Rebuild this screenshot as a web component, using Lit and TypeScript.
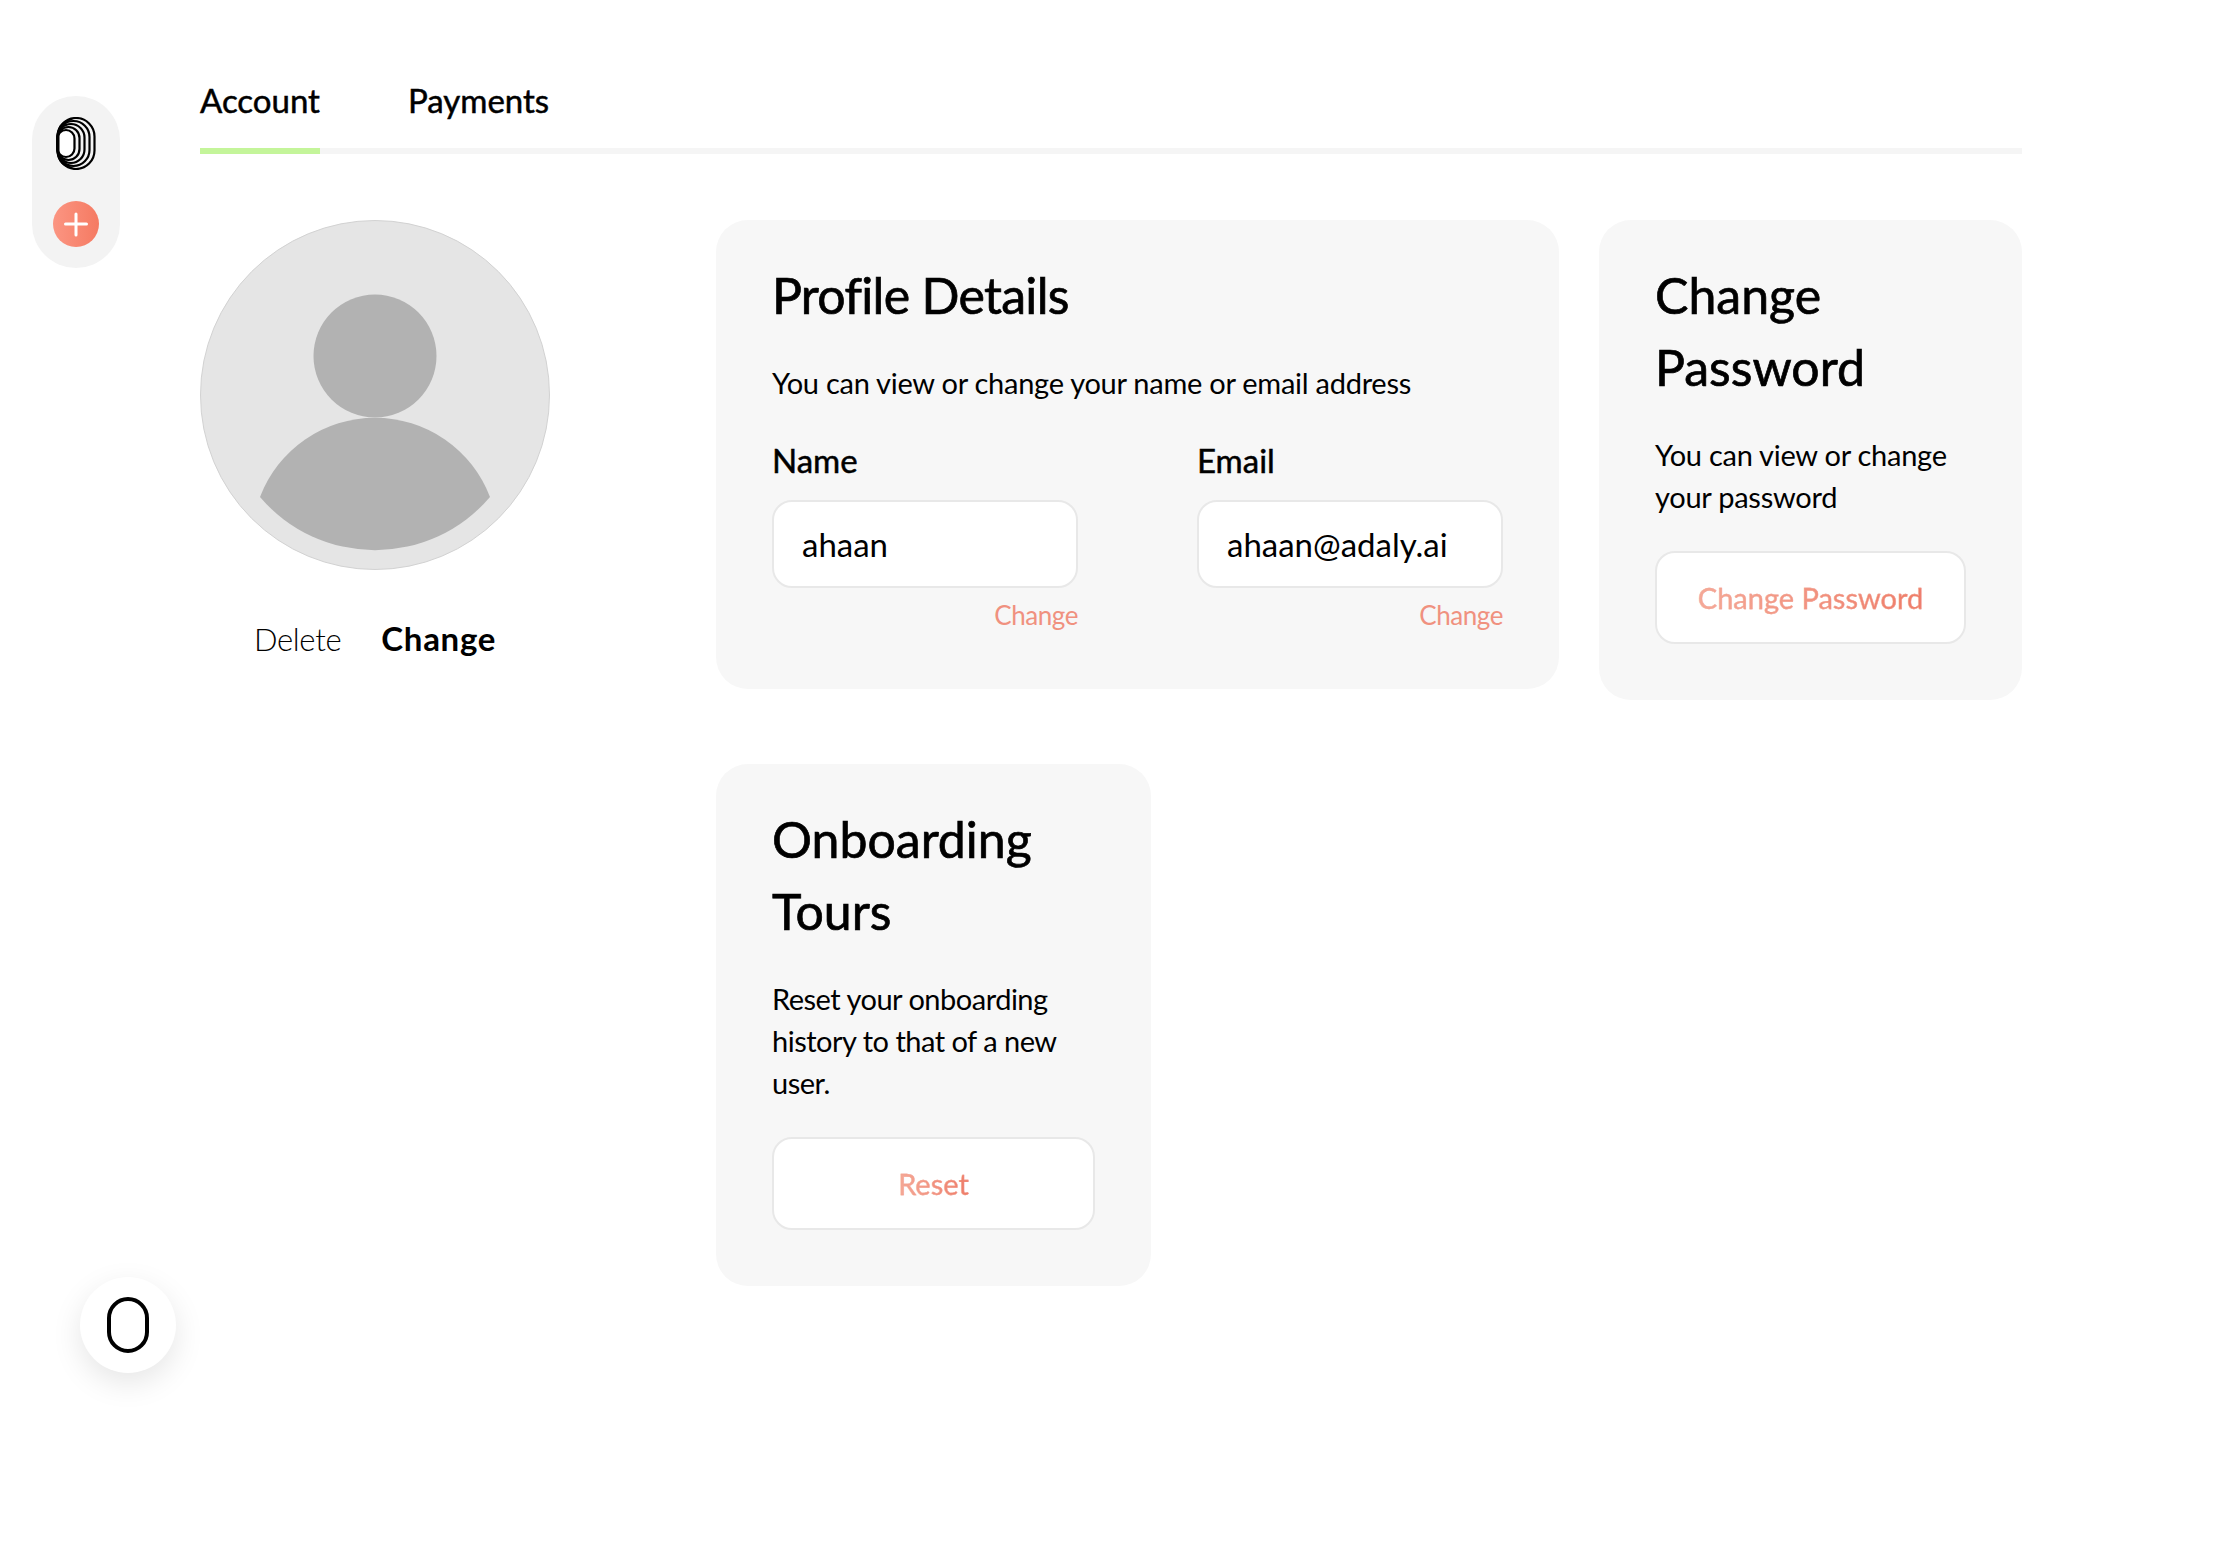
import { LitElement, html, svg, css } from "lit";
import { customElement } from "lit/decorators.js";

@customElement("app-root")
export class AppRoot extends LitElement {
  static styles = css`
    :host {
      display: block;
      position: relative;
      height: 1564px;
      background: #fff;
      color: #000;
      font-family: Lato, "Liberation Sans", sans-serif;
      overflow: hidden;
    }
    .page {
      display: flex;
      align-items: flex-start;
      padding-left: 32px;
    }
    .rail {
      width: 88px;
      height: 172px;
      margin-top: 96px;
      border-radius: 44px;
      background: #f3f3f3;
      display: flex;
      flex-direction: column;
      align-items: center;
      padding-top: 21px;
      box-sizing: border-box;
      gap: 31px;
      flex: none;
    }
    .logo {
      display: block;
      width: 40px;
      height: 53px;
    }
    .plus {
      display: block;
      width: 46px;
      height: 46px;
    }
    .main {
      width: 1822px;
      margin-left: 80px;
      padding-top: 76px;
      flex: none;
    }
    .tabs {
      display: flex;
      gap: 88px;
      height: 72px;
      border-bottom: 6px solid #f5f5f5;
      font-size: 33px;
      line-height: 48px;
      font-weight: 400;
      -webkit-text-stroke: 0.5px #000;
    }
    .tab {
      height: 72px;
    }
    .tab.active {
      border-bottom: 6px solid #c4f59a;
    }
    .content {
      display: flex;
      margin-top: 66px;
    }
    .side {
      width: 350px;
      margin-right: 166px;
      flex: none;
    }
    .avatar {
      display: block;
      width: 350px;
      height: 350px;
    }
    .avatar-actions {
      display: flex;
      justify-content: center;
      align-items: baseline;
      gap: 40px;
      margin-top: 44px;
      line-height: 48px;
    }
    .delete {
      font-size: 31px;
      font-weight: 300;
      letter-spacing: -0.3px;
    }
    .change-photo {
      font-size: 33px;
      font-weight: 700;
      letter-spacing: 0.7px;
    }
    .cards {
      display: flex;
      flex-direction: column;
      gap: 64px;
    }
    .row {
      display: flex;
      align-items: flex-start;
      gap: 40px;
    }
    .card {
      background: #f7f7f7;
      border-radius: 32px;
      padding: 39px 56px 56px;
      box-sizing: border-box;
    }
    .profile {
      width: 843px;
      height: 469px;
    }
    .password {
      width: 423px;
      height: 480px;
    }
    .onboarding {
      width: 435px;
      height: 522px;
    }
    h2 {
      margin: 0;
      font-size: 50px;
      line-height: 72px;
      font-weight: 400;
      -webkit-text-stroke: 0.7px #000;
    }
    .profile h2 {
      letter-spacing: -0.7px;
    }
    p {
      margin: 31px 0 0;
      font-size: 29px;
      line-height: 42px;
      font-weight: 400;
      letter-spacing: -0.26px;
    }
    .onboarding p {
      letter-spacing: -0.5px;
    }
    .fields {
      display: flex;
      justify-content: space-between;
      margin-top: 32px;
    }
    .field {
      width: 306px;
    }
    label {
      display: block;
      font-size: 33px;
      line-height: 48px;
      font-weight: 400;
      -webkit-text-stroke: 0.5px #000;
    }
    .input {
      height: 88px;
      margin-top: 16px;
      padding-left: 28px;
      box-sizing: border-box;
      display: flex;
      align-items: center;
      background: #fff;
      border: 2px solid #e8e8e8;
      border-radius: 20px;
      font-size: 33px;
    }
    .link {
      margin-top: 9px;
      text-align: right;
      font-size: 26px;
      line-height: 36px;
      letter-spacing: -0.45px;
      color: #f0917f;
    }
    .btn {
      display: flex;
      align-items: center;
      justify-content: center;
      width: 100%;
      height: 93px;
      margin-top: 33px;
      box-sizing: border-box;
      background: #fff;
      border: 2px solid #e8e8e8;
      border-radius: 20px;
      font-size: 29px;
      font-weight: 400;
    }
    .btn span {
      background: linear-gradient(90deg, #f5a997, #ee7c67);
      -webkit-background-clip: text;
      background-clip: text;
      color: transparent;
      -webkit-text-stroke: 0.3px #f3a090;
    }
    .fab {
      position: absolute;
      left: 80px;
      top: 1277px;
      width: 96px;
      height: 96px;
      border-radius: 50%;
      background: #fff;
      box-shadow: 0 10px 30px rgba(0, 0, 0, 0.1);
      display: flex;
      align-items: center;
      justify-content: center;
    }
    .fab svg {
      display: block;
      width: 42px;
      height: 56px;
    }
  `;

  private _renderLogo() {
    const rings = [
      [17, 27],
      [22, 33],
      [27, 39],
      [32, 45],
      [37, 51],
    ];
    return html`<svg class="logo" viewBox="0 0 40 53" fill="none">
      <rect x="3" y="14" width="14" height="25" rx="7" fill="#fff"></rect>
      ${rings.map(
        ([w, h]) => svg`<rect
          x="1.5"
          y=${26.5 - h / 2}
          width=${w}
          height=${h}
          rx=${w / 2}
          stroke="#000"
          stroke-width="2.200"
        ></rect>`
      )}
      <path
        d="M19 1.500C7 1.500 1 9 1 18v17c0 9 6 16.500 18 16.500C9 48 3.500 42 3.500 35V18C3.500 11 9 5 19 1.500Z"
        fill="#000"
      ></path>
    </svg>`;
  }

  render() {
    return html`
      <div class="page">
        <nav class="rail">
          ${this._renderLogo()}
          <svg class="plus" viewBox="0 0 46 46">
            <defs>
              <linearGradient id="plus-fill" x1="0" y1="0" x2="1" y2="0">
                <stop offset="0" stop-color="#fb9582"></stop>
                <stop offset="1" stop-color="#f57a62"></stop>
              </linearGradient>
            </defs>
            <circle cx="23" cy="23" r="23" fill="url(#plus-fill)"></circle>
            <path
              d="M23 13v21M12.500 23h21"
              stroke="#fff"
              stroke-width="3"
              stroke-linecap="round"
            ></path>
          </svg>
        </nav>

        <div class="main">
          <div class="tabs">
            <div class="tab active">Account</div>
            <div class="tab">Payments</div>
          </div>

          <div class="content">
            <div class="side">
              <svg class="avatar" viewBox="0 0 350 350">
                <circle
                  cx="175"
                  cy="175"
                  r="174.500"
                  fill="#e5e5e5"
                  stroke="#d2d2d2"
                ></circle>
                <circle cx="175" cy="136" r="61.500" fill="#b2b2b2"></circle>
                <path
                  d="M60 277A123 123 0 0 1 290 277A151 151 0 0 1 60 277Z"
                  fill="#b2b2b2"
                ></path>
              </svg>
              <div class="avatar-actions">
                <span class="delete">Delete</span>
                <span class="change-photo">Change</span>
              </div>
            </div>

            <div class="cards">
              <div class="row">
                <section class="card profile">
                  <h2>Profile Details</h2>
                  <p>You can view or change your name or email address</p>
                  <div class="fields">
                    <div class="field">
                      <label>Name</label>
                      <div class="input">ahaan</div>
                      <div class="link">Change</div>
                    </div>
                    <div class="field">
                      <label>Email</label>
                      <div class="input">ahaan@adaly.ai</div>
                      <div class="link">Change</div>
                    </div>
                  </div>
                </section>
                <section class="card password">
                  <h2>Change<br />Password</h2>
                  <p>You can view or change<br />your password</p>
                  <div class="btn"><span>Change Password</span></div>
                </section>
              </div>
              <div class="row">
                <section class="card onboarding">
                  <h2>Onboarding<br />Tours</h2>
                  <p>Reset your onboarding<br />history to that of a new<br />user.</p>
                  <div class="btn"><span>Reset</span></div>
                </section>
              </div>
            </div>
          </div>
        </div>
      </div>

      <div class="fab">
        <svg viewBox="0 0 42 56" fill="none">
          <rect
            x="2"
            y="2"
            width="38"
            height="52"
            rx="19"
            stroke="#000"
            stroke-width="4"
          ></rect>
        </svg>
      </div>
    `;
  }
}
